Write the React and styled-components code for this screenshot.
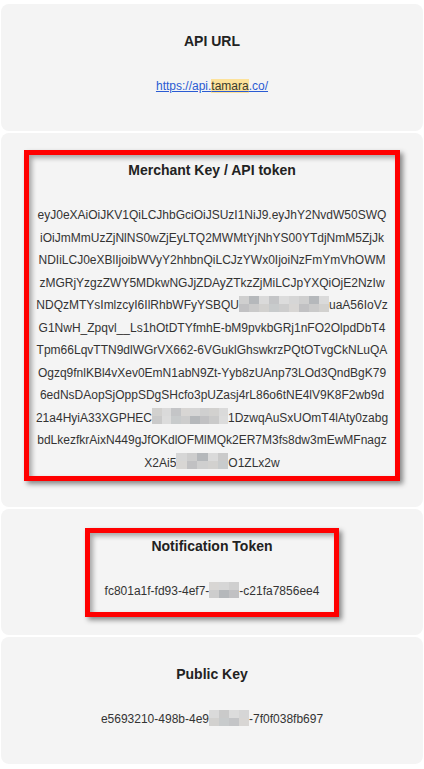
import React from "react";
import styled, { createGlobalStyle } from "styled-components";

const GlobalStyle = createGlobalStyle`
  html, body { margin: 0; padding: 0; background: #ffffff; }
  body { font-family: "Liberation Sans", Arial, sans-serif; }
`;

const Page = styled.div`
  display: flex;
  flex-direction: column;
  gap: 2px;
  padding: 4px 1px 4px 1px;
`;

const Card = styled.section`
  background: #f4f4f4;
  border-radius: 8px;
  padding: 29px 16px 33px;
  text-align: center;
`;

const Highlight = styled.div`
  width: ${(p) => p.$width}px;
  box-sizing: border-box;
  margin: ${(p) => -p.$top}px auto ${(p) => -p.$bottom}px;
  padding: ${(p) => p.$padTop}px 0 ${(p) => p.$padBottom}px;
  border: 5px solid #ff0000;
  box-shadow: 3px 3px 5px rgba(0, 0, 0, 0.45), inset 3px 3px 5px rgba(0, 0, 0, 0.32);
`;

const Title = styled.h3`
  margin: 0;
  font-size: 14px;
  line-height: 16px;
  font-weight: 700;
  color: #222222;
`;

const Value = styled.div`
  margin-top: 26px;
  font-size: 12px;
  line-height: 23px;
  color: #333333;
  white-space: nowrap;
`;

const Line = styled.div`
  display: block;
  height: 22.5px;
`;

const Link = styled.a`
  color: #2a5bd3;
  text-decoration: underline;
`;

const Mark = styled.span`
  background: #fde29a;
  color: #3a3a2c;
`;

const Mosaic = styled.span`
  display: inline-block;
  overflow: hidden;
  width: ${(p) => p.$w}px;
  height: 16px;
  vertical-align: -2.5px;
`;

const MosaicGrid = styled.span`
  display: grid;
  grid-auto-flow: column;
  grid-template-rows: 1fr 1fr;
  grid-auto-columns: 1fr;
  width: 100%;
  height: 100%;
`;

const Cell = styled.span`
  background: ${(p) => p.$c};
`;

const palette = [
  "#d6d6d6", "#cfcfcf", "#d2d1cf", "#c8cbcc", "#cdcdcd", "#b5b8bb",
  "#dadada", "#c4c5c7", "#d8d6d4", "#c1c1c3", "#cacaca", "#dcdcdc",
];

function Blur({ w, seed = 0 }) {
  const cols = Math.max(2, Math.round(w / 10));
  const cells = [];
  for (let i = 0; i < cols * 2; i++) {
    cells.push(<Cell key={i} $c={palette[(i * 7 + seed * 5 + (i % 3)) % palette.length]} />);
  }
  return (
    <Mosaic $w={w}>
      <MosaicGrid>{cells}</MosaicGrid>
    </Mosaic>
  );
}

const tokenLines = [
  ["eyJ0eXAiOiJKV1QiLCJhbGciOiJSUzI1NiJ9.eyJhY2NvdW50SWQ"],
  ["iOiJmMmUzZjNlNS0wZjEyLTQ2MWMtYjNhYS00YTdjNmM5ZjJk"],
  ["NDIiLCJ0eXBlIjoibWVyY2hhbnQiLCJzYWx0IjoiNzFmYmVhOWM"],
  ["zMGRjYzgzZWY5MDkwNGJjZDAyZTkzZjMiLCJpYXQiOjE2NzIw"],
  ["NDQzMTYsImlzcyI6IlRhbWFyYSBQU", 90, "uaA56IoVz"],
  ["G1NwH_Zpqvl__Ls1hOtDTYfmhE-bM9pvkbGRj1nFO2OlpdDbT4"],
  ["Tpm66LqvTTN9dlWGrVX662-6VGuklGhswkrzPQtOTvgCkNLuQA"],
  ["Ogzq9fnlKBl4vXev0EmN1abN9Zt-Yyb8zUAnp73LOd3QndBgK79"],
  ["6edNsDAopSjOppSDgSHcfo3pUZasj4rL86o6tNE4lV9K8F2wb9d"],
  ["21a4HyiA33XGPHEC", 76, "1DzwqAuSxUOmT4lAty0zabg"],
  ["bdLkezfkrAixN449gJfOKdlOFMlMQk2ER7M3fs8dw3mEwMFnagz"],
  ["X2Ai5", 52, "O1ZLx2w"],
];

function Parts({ parts, seed }) {
  return parts.map((p, i) =>
    typeof p === "number" ? <Blur key={i} w={p} seed={seed + i} /> : <React.Fragment key={i}>{p}</React.Fragment>
  );
}

export default function App() {
  return (
    <>
      <GlobalStyle />
      <Page>
        <Card>
          <Title>API URL</Title>
          <Value>
            <Link href="#">
              https://api.<Mark>tamara</Mark>.co/
            </Link>
          </Value>
        </Card>

        <Card>
          <Highlight $width={376} $top={12} $bottom={7} $padTop={7} $padBottom={2}>
            <Title>Merchant Key / API token</Title>
            <Value>
              {tokenLines.map((parts, i) => (
                <Line key={i}>
                  <Parts parts={parts} seed={i} />
                </Line>
              ))}
            </Value>
          </Highlight>
        </Card>

        <Card>
          <Highlight $width={254} $top={10} $bottom={15} $padTop={5} $padBottom={9}>
            <Title>Notification Token</Title>
            <Value>
              <Parts parts={["fc801a1f-fd93-4ef7-", 30, "-c21fa7856ee4"]} seed={3} />
            </Value>
          </Highlight>
        </Card>

        <Card>
          <Title>Public Key</Title>
          <Value>
            <Parts parts={["e5693210-498b-4e9", 40, "-7f0f038fb697"]} seed={5} />
          </Value>
        </Card>
      </Page>
    </>
  );
}
